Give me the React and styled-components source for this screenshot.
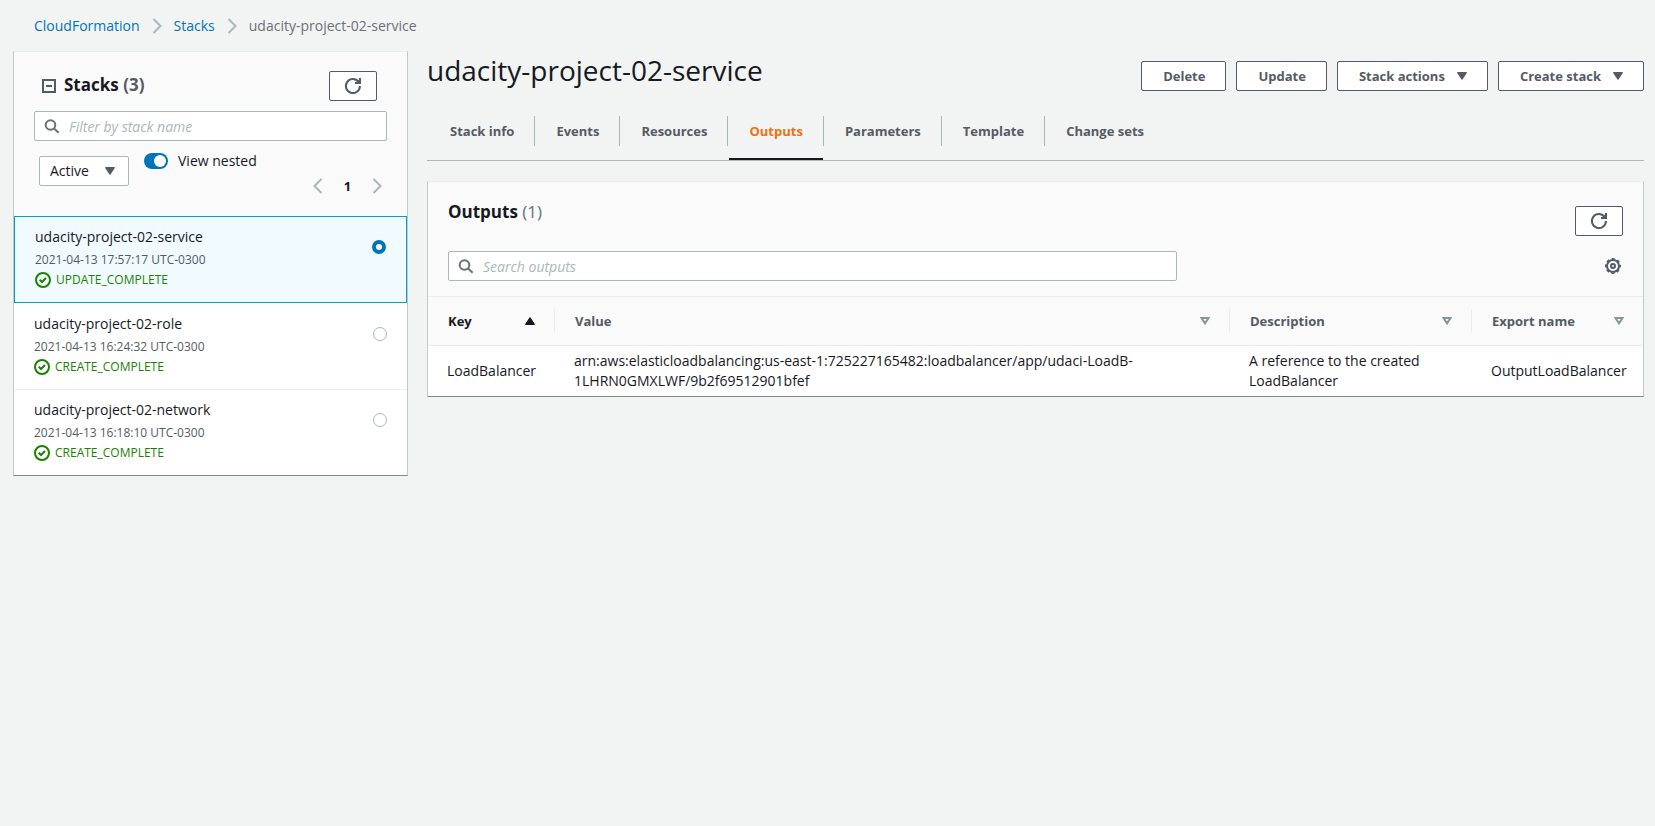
import React, { useState } from 'react';
import styled, { createGlobalStyle, css } from 'styled-components';

const color = {
  page: '#f2f3f3',
  panelHead: '#fafafa',
  text: '#16191f',
  muted: '#545b64',
  soft: '#687078',
  link: '#0073bb',
  line: '#aab7b8',
  faint: '#eaeded',
  accent: '#ec7211',
  green: '#1d8102',
};

const GlobalStyle = createGlobalStyle`
  *, *::before, *::after { box-sizing: border-box; }
  body {
    margin: 0;
    background: ${color.page};
    color: ${color.text};
    font: 400 14px/20px "Open Sans", "Noto Sans", sans-serif;
  }
  button, input, select { font: inherit; color: inherit; margin: 0; }
`;

/* ---------- icons ---------- */

const Icon = styled.svg`
  display: block;
  flex: none;
  fill: none;
  stroke: currentColor;
  stroke-width: 2;
`;

const Chevron = ({ left }) => (
  <Icon width="10" height="16" viewBox="0 0 10 16" aria-hidden="true">
    <path d={left ? 'M8.5 1L1.5 8l7 7' : 'M1.5 1l7 7-7 7'} />
  </Icon>
);

const RefreshIcon = () => (
  <Icon width="18" height="18" viewBox="0 0 18 18" aria-hidden="true">
    <path d="M15.9 9A7 7 0 1 1 14.6 5" />
    <path d="M11 6h5V1" />
    <path d="M11.5 6L16 1.5V6z" fill="currentColor" stroke="none" />
  </Icon>
);

const SearchIcon = () => (
  <Icon width="16" height="16" viewBox="0 0 16 16" aria-hidden="true">
    <circle cx="6.5" cy="7" r="4.8" />
    <path d="M10 10.5l4.7 4.2" />
  </Icon>
);

const CollapseIcon = () => (
  <Icon width="14" height="14" viewBox="0 0 14 14" aria-hidden="true">
    <rect x="1" y="1" width="12" height="12" />
    <path d="M4 7h6" />
  </Icon>
);

const CheckIcon = () => (
  <Icon width="16" height="16" viewBox="0 0 16 16" aria-hidden="true">
    <circle cx="8" cy="8" r="7" />
    <path d="M4.7 7.8l2.3 2.2 4-4" />
  </Icon>
);

const GearIcon = () => (
  <Icon width="16" height="16" viewBox="0 0 16 16" aria-hidden="true">
    <circle cx="8" cy="8" r="6" />
    <circle cx="8" cy="8" r="7.2" strokeWidth="1.6" strokeDasharray="3 2.655" strokeDashoffset="1.5" />
    <circle cx="8" cy="8" r="2" />
  </Icon>
);

const Triangle = ({ up, hollow }) => (
  <Icon width="10" height="8" viewBox="0 0 10 8" aria-hidden="true">
    {hollow ? (
      <path d="M1.5 1h7L5 6.4z" />
    ) : (
      <path
        d={up ? 'M5 .8L9.3 7.3H.7z' : 'M5 7.2L.7.7h8.6z'}
        fill="currentColor"
        strokeWidth="1.2"
        strokeLinejoin="round"
      />
    )}
  </Icon>
);

/* ---------- page frame ---------- */

const Page = styled.div`
  padding: 0 11px 0 13px;
`;

const Breadcrumbs = styled.nav`
  display: flex;
  align-items: center;
  gap: 12px;
  padding: 16px 21px 15px;
  color: ${color.soft};
  svg { color: ${color.line}; }
`;

const Link = styled.a`
  color: ${color.link};
  text-decoration: none;
`;

const Columns = styled.div`
  display: grid;
  grid-template-columns: 395px minmax(0, 1fr);
  gap: 19px;
  align-items: start;
`;

const Panel = styled.section`
  background: #fff;
  border: 1px solid #c1c9c9;
  border-top-color: ${color.faint};
  border-bottom-color: #7f8c8d;
`;

const PanelTitle = styled.h2`
  margin: 0;
  font-size: 17px;
  line-height: 24px;
  font-weight: 700;
`;

const Count = styled.span`
  color: ${(p) => (p.$light ? color.soft : color.muted)};
  font-weight: ${(p) => (p.$light ? 400 : 700)};
`;

/* ---------- controls ---------- */

const Button = styled.button`
  display: inline-flex;
  align-items: center;
  justify-content: center;
  gap: 12px;
  height: 30px;
  padding: 0 20px 0 21px;
  border: 1px solid ${color.muted};
  border-radius: 2px;
  background: #fff;
  color: ${color.muted};
  font-size: 13px;
  font-weight: 700;
  white-space: nowrap;
  cursor: pointer;
  ${(p) => p.$icon && css`
    width: 48px;
    padding: 0;
  `}
`;

const BareButton = styled.button`
  display: flex;
  align-items: center;
  justify-content: center;
  width: 20px;
  height: 20px;
  padding: 0;
  border: 0;
  background: none;
  color: ${(p) => (p.$dim ? color.line : color.muted)};
  cursor: pointer;
`;

const SearchField = styled.label`
  display: flex;
  align-items: center;
  gap: 9px;
  width: ${(p) => p.$width || '100%'};
  height: 30px;
  padding: 0 9px;
  border: 1px solid ${color.line};
  border-radius: 2px;
  background: #fff;
  color: ${color.soft};
`;

const SearchInput = styled.input`
  flex: 1;
  min-width: 0;
  padding: 2px 0 0;
  border: 0;
  outline: 0;
  background: none;
  &::placeholder {
    color: ${color.line};
    font-style: italic;
    opacity: 1;
  }
`;

const Search = ({ label, width }) => (
  <SearchField $width={width}>
    <SearchIcon />
    <SearchInput type="text" placeholder={label} aria-label={label} />
  </SearchField>
);

/* ---------- stack list ---------- */

const StacksHead = styled.header`
  padding: 19px 20px 20px;
  background: ${color.panelHead};
`;

const StacksTitleRow = styled.div`
  display: flex;
  align-items: center;
  gap: 8px;
  margin-bottom: 10px;
  padding: 0 10px 0 8px;
  color: ${color.muted};
  ${PanelTitle} {
    flex: 1;
    padding-bottom: 2px;
    color: ${color.text};
  }
`;

const Filters = styled.div`
  display: flex;
  align-items: flex-start;
  padding: 10px 0 0 5px;
`;

const SelectBox = styled.div`
  position: relative;
  margin-top: 5px;
  svg {
    position: absolute;
    top: 11px;
    right: 14px;
    color: ${color.muted};
    pointer-events: none;
  }
`;

const Select = styled.select`
  appearance: none;
  display: block;
  width: 90px;
  height: 30px;
  padding: 0 30px 0 10px;
  border: 1px solid ${color.line};
  border-radius: 2px;
  background: #fff;
`;

const ToggleLabel = styled.label`
  display: flex;
  align-items: center;
  gap: 10px;
  margin-left: 15px;
  cursor: pointer;
`;

const Toggle = styled.input`
  appearance: none;
  width: 24px;
  height: 16px;
  padding: 2px;
  border-radius: 8px;
  background: ${color.line};
  &::before {
    content: '';
    display: block;
    width: 12px;
    height: 12px;
    border-radius: 50%;
    background: #fff;
  }
  &:checked { background: ${color.link}; }
  &:checked::before { margin-left: auto; }
`;

const Pager = styled.div`
  display: flex;
  align-items: center;
  margin: 25px 0 0 auto;
`;

const PageNumber = styled.span`
  width: 39px;
  font-size: 13px;
  font-weight: 700;
  text-align: center;
`;

const StackRow = styled.label`
  display: flex;
  align-items: flex-start;
  justify-content: space-between;
  padding: 10px 20px 12px;
  border-top: 1px solid ${(p) => (p.$ruled ? color.faint : 'transparent')};
  cursor: pointer;
  ${(p) => p.$selected && css`
    border: 1px solid #00a1c9;
    background: #f1faff;
  `}
`;

const StackName = styled.div`
  margin-bottom: 3px;
`;

const StackMeta = styled.div`
  display: flex;
  align-items: center;
  gap: 5px;
  color: ${(p) => (p.$status ? color.green : color.muted)};
  font-size: 12px;
`;

const Radio = styled.input`
  appearance: none;
  width: 14px;
  height: 14px;
  && { margin-top: 13px; }
  border: 1px solid ${color.line};
  border-radius: 50%;
  background: #fff;
  &:checked { border: 4px solid ${color.link}; }
`;

const stacks = [
  { name: 'udacity-project-02-service', date: '2021-04-13 17:57:17 UTC-0300', status: 'UPDATE_COMPLETE' },
  { name: 'udacity-project-02-role', date: '2021-04-13 16:24:32 UTC-0300', status: 'CREATE_COMPLETE' },
  { name: 'udacity-project-02-network', date: '2021-04-13 16:18:10 UTC-0300', status: 'CREATE_COMPLETE' },
];

function StackList() {
  const [selected, setSelected] = useState(0);
  return (
    <Panel>
      <StacksHead>
        <StacksTitleRow>
          <CollapseIcon />
          <PanelTitle>Stacks <Count>(3)</Count></PanelTitle>
          <Button $icon aria-label="Refresh stacks"><RefreshIcon /></Button>
        </StacksTitleRow>
        <Search label="Filter by stack name" />
        <Filters>
          <SelectBox>
            <Select aria-label="Stack status" defaultValue="Active">
              <option>Active</option>
            </Select>
            <Triangle />
          </SelectBox>
          <ToggleLabel>
            <Toggle type="checkbox" defaultChecked />
            View nested
          </ToggleLabel>
          <Pager>
            <BareButton $dim aria-label="Previous page"><Chevron left /></BareButton>
            <PageNumber>1</PageNumber>
            <BareButton $dim aria-label="Next page"><Chevron /></BareButton>
          </Pager>
        </Filters>
      </StacksHead>
      <div>
        {stacks.map((s, i) => (
          <StackRow key={s.name} $selected={i === selected} $ruled={i > 0 && i - 1 !== selected}>
            <div>
              <StackName>{s.name}</StackName>
              <StackMeta>{s.date}</StackMeta>
              <StackMeta $status><CheckIcon />{s.status}</StackMeta>
            </div>
            <Radio type="radio" name="stack" checked={i === selected} onChange={() => setSelected(i)} />
          </StackRow>
        ))}
      </div>
    </Panel>
  );
}

/* ---------- stack details ---------- */

const TitleBar = styled.header`
  display: flex;
  align-items: flex-start;
  justify-content: space-between;
  margin-bottom: 25px;
`;

const Title = styled.h1`
  margin: 0;
  font-size: 28px;
  line-height: 38px;
  font-weight: 400;
`;

const Actions = styled.div`
  display: flex;
  gap: 10px;
  padding-top: 10px;
`;

const Tabs = styled.nav`
  display: flex;
  margin-bottom: 20px;
  padding-left: 2px;
  border-bottom: 1px solid ${color.line};
`;

const TabItem = styled.div`
  display: flex;
  &:not(:last-child)::after {
    content: '';
    width: 1px;
    height: 30px;
    background: ${color.line};
  }
`;

const Tab = styled.a`
  height: 44px;
  margin-left: 1px;
  padding: 0 20px;
  border-bottom: 2px solid ${(p) => (p.$active ? color.text : 'transparent')};
  color: ${(p) => (p.$active ? color.accent : color.muted)};
  font-size: 13px;
  line-height: 30px;
  font-weight: 700;
  text-decoration: none;
`;

const OutputsHead = styled.header`
  padding: 18px 20px 15px;
  border-bottom: 1px solid ${color.faint};
  background: ${color.panelHead};
`;

const HeadRow = styled.div`
  display: flex;
  align-items: flex-start;
  justify-content: space-between;
  margin-bottom: 15px;
  ${Button} { margin-top: 6px; }
`;

const ToolRow = styled.div`
  display: flex;
  align-items: center;
  justify-content: space-between;
`;

const Table = styled.table`
  width: 100%;
  border-collapse: collapse;
  table-layout: fixed;
`;

const Th = styled.th`
  width: ${(p) => p.$width};
  padding: 12px 0;
  border-bottom: 1px solid ${color.faint};
  background: ${color.panelHead};
  color: ${(p) => (p.$sorted ? color.text : color.muted)};
  font-size: 13px;
  font-weight: 700;
`;

const ThInner = styled.div`
  display: flex;
  align-items: center;
  justify-content: space-between;
  height: 24px;
  padding: 0 19px 0 20px;
  ${Th}:not(:last-child) & {
    border-right: 1px solid ${color.faint};
  }
  svg { color: ${(p) => (p.$sorted ? color.text : '#879596')}; }
`;

const Td = styled.td`
  padding: 5px 10px 5px 19px;
  vertical-align: middle;
`;

const tabs = ['Stack info', 'Events', 'Resources', 'Outputs', 'Parameters', 'Template', 'Change sets'];

const columns = [
  { label: 'Key', width: '127px', sorted: true },
  { label: 'Value', width: 'auto' },
  { label: 'Description', width: '242px' },
  { label: 'Export name', width: '171px' },
];

function StackDetails() {
  return (
    <main>
      <TitleBar>
        <Title>udacity-project-02-service</Title>
        <Actions>
          <Button>Delete</Button>
          <Button>Update</Button>
          <Button>Stack actions <Triangle /></Button>
          <Button>Create stack <Triangle /></Button>
        </Actions>
      </TitleBar>
      <Tabs>
        {tabs.map((t) => (
          <TabItem key={t}>
            <Tab href="#" $active={t === 'Outputs'}>{t}</Tab>
          </TabItem>
        ))}
      </Tabs>
      <Panel>
        <OutputsHead>
          <HeadRow>
            <PanelTitle>Outputs <Count $light>(1)</Count></PanelTitle>
            <Button $icon aria-label="Refresh outputs"><RefreshIcon /></Button>
          </HeadRow>
          <ToolRow>
            <Search label="Search outputs" width="62%" />
            <BareButton aria-label="Preferences"><GearIcon /></BareButton>
          </ToolRow>
        </OutputsHead>
        <Table>
          <thead>
            <tr>
              {columns.map((c) => (
                <Th key={c.label} $width={c.width} $sorted={c.sorted}>
                  <ThInner $sorted={c.sorted}>
                    {c.label}
                    <Triangle up={c.sorted} hollow={!c.sorted} />
                  </ThInner>
                </Th>
              ))}
            </tr>
          </thead>
          <tbody>
            <tr>
              <Td>LoadBalancer</Td>
              <Td>
                arn:aws:elasticloadbalancing:us-east-1:725227165482:loadbalancer/app/udaci-LoadB-<wbr />1LHRN0GMXLWF/9b2f69512901bfef
              </Td>
              <Td>A reference to the created LoadBalancer</Td>
              <Td>OutputLoadBalancer</Td>
            </tr>
          </tbody>
        </Table>
      </Panel>
    </main>
  );
}

export default function App() {
  return (
    <Page>
      <GlobalStyle />
      <Breadcrumbs aria-label="Breadcrumbs">
        <Link href="#">CloudFormation</Link>
        <Chevron />
        <Link href="#">Stacks</Link>
        <Chevron />
        <span>udacity-project-02-service</span>
      </Breadcrumbs>
      <Columns>
        <StackList />
        <StackDetails />
      </Columns>
    </Page>
  );
}
